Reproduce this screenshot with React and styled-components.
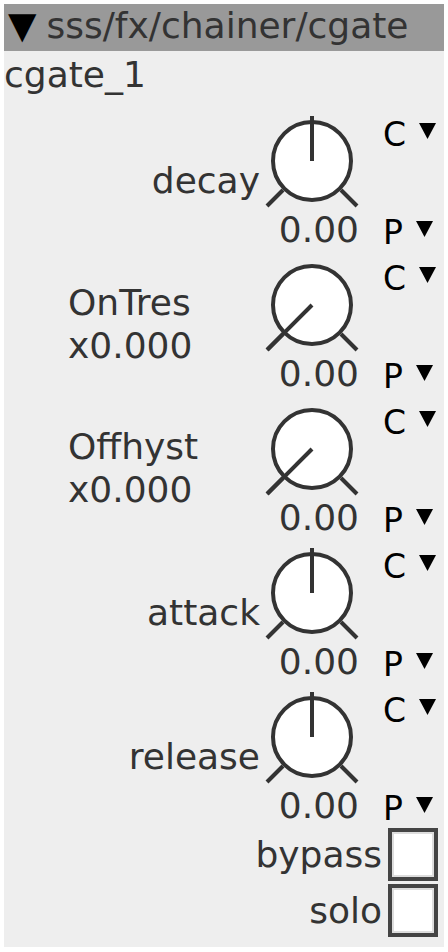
import React from 'react'
import styled, { createGlobalStyle } from 'styled-components'

const GlobalStyle = createGlobalStyle`
    body {
        margin: 4px;
        background: #fff;
        font-family: 'DejaVu Sans', 'Liberation Sans', sans-serif;
    }
`

const params = [
    { name: 'decay', value: 0.5 },
    { name: 'OnTres x0.000', value: 0 },
    { name: 'Offhyst x0.000', value: 0 },
    { name: 'attack', value: 0.5 },
    { name: 'release', value: 0.5 },
]

function Knob({ value }) {
    const cx = 50, cy = 45
    const a = (-135 + value * 270) * Math.PI / 180
    const ex = cx + 63 * Math.sin(a)
    const ey = cy - 63 * Math.cos(a)
    return (
        <KnobSvg width="100" height="94" viewBox="0 0 100 94">
            <circle cx={cx} cy={cy} r="39" fill="#fff" stroke="#333" strokeWidth="4" />
            <line x1="21" y1="74" x2="5" y2="90" stroke="#333" strokeWidth="4" />
            <line x1="79" y1="74" x2="95" y2="90" stroke="#333" strokeWidth="4" />
            <line x1={cx} y1={cy} x2={ex} y2={ey} stroke="#333" strokeWidth="4" />
        </KnobSvg>
    )
}

function Caret() {
    return (
        <CaretSvg width="17" height="16" viewBox="0 0 17 16">
            <polygon points="0,0 17,0 8.5,16" fill="#000" />
        </CaretSvg>
    )
}

function App() {
  return (
    <>
        <GlobalStyle />
        <Panel>
            <Header>
                <HeaderCaret>▼</HeaderCaret>
                sss/fx/chainer/cgate
            </Header>
            <InstanceName>cgate_1</InstanceName>

            <ParamList>
                {params.map(p => (
                    <ParamRow key={p.name}>
                        <LabelCell>
                            <Label>{p.name}</Label>
                        </LabelCell>
                        <KnobCell>
                            <Knob value={p.value} />
                            <Value>0.00</Value>
                        </KnobCell>
                        <SelectCell>
                            <Select>C<Caret /></Select>
                            <Select>P<Caret /></Select>
                        </SelectCell>
                    </ParamRow>
                ))}
            </ParamList>

            <ToggleRow>
                <ToggleLabel>bypass</ToggleLabel>
                <Checkbox />
            </ToggleRow>
            <ToggleRow>
                <ToggleLabel>solo</ToggleLabel>
                <Checkbox />
            </ToggleRow>
        </Panel>
    </>
  )
}

export default App

const Panel = styled.div`
    width: 440px;
    background: #eeeeee;
    color: #333;
    font-size: 36px;
    padding-bottom: 9px;
`

const Header = styled.div`
    height: 47px;
    box-sizing: border-box;
    display: flex;
    align-items: flex-start;
    padding-left: 4px;
    line-height: 44px;
    background: #999999;
    white-space: nowrap;
`

const HeaderCaret = styled.span`
    color: #000;
    font-size: 37px;
    line-height: 44px;
    margin-right: 10px;
`

const InstanceName = styled.div`
    padding-top: 3px;
    line-height: 42px;
`

const ParamList = styled.div`
    padding-top: 10px;
`

const ParamRow = styled.div`
    display: grid;
    grid-template-columns: 1fr 100px 82px;
    padding: 10px 0 0 64px;
    height: 144px;
    box-sizing: border-box;
`

const LabelCell = styled.div`
    display: flex;
    align-items: center;
    justify-content: flex-end;
    padding-right: 2px;
`

const Label = styled.div`
    line-height: 43px;
    margin-top: -6px;
`

const KnobCell = styled.div`
    display: flex;
    flex-direction: column;
`

const KnobSvg = styled.svg`
    display: block;
`

const Value = styled.div`
    line-height: 40px;
    text-align: right;
    padding-right: 3px;
    white-space: nowrap;
`

const SelectCell = styled.div`
    display: flex;
    flex-direction: column;
    justify-content: space-between;
    padding-left: 21px;
    padding-top: 1px;
`

const Select = styled.div`
    display: flex;
    align-items: flex-start;
    font-size: 33px;
    line-height: 35px;
    color: #000;
`

const CaretSvg = styled.svg`
    display: block;
    margin: 6px 0 0 13px;
`

const ToggleRow = styled.div`
    display: flex;
    justify-content: flex-end;
    align-items: center;
    gap: 6px;
    height: 56px;
    padding-right: 6px;
`

const ToggleLabel = styled.span`
    line-height: 41px;
`

const Checkbox = styled.div`
    width: 50px;
    height: 53px;
    box-sizing: border-box;
    border: 4px solid #444;
    box-shadow: inset 0 0 0 2px #dddddd;
    background: #fff;
`
